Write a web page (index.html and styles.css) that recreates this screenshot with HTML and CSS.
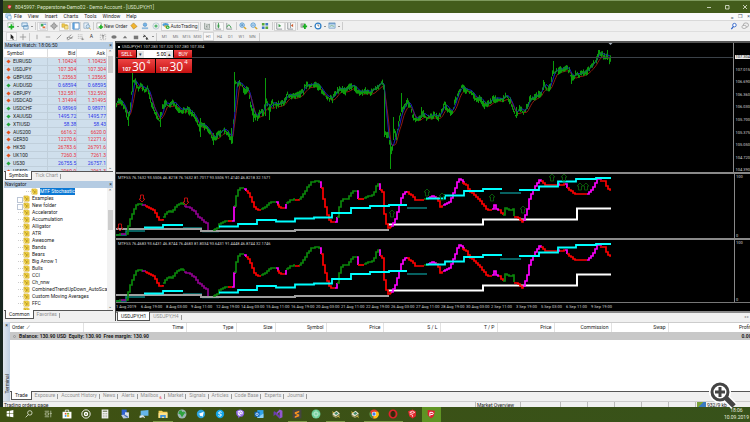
FILE: index.html
```html
<!DOCTYPE html>
<html lang="en">
<head>
<meta charset="utf-8">
<title>8045997: Pepperstone-Demo02 - Demo Account</title>
<link rel="stylesheet" href="styles.css">
</head>
<body>
<svg class="defs" aria-hidden="true">
  <symbol id="i-ind" viewBox="0 0 8 8"><path d="M1 1h5l1 1v5H1z" fill="#f3d548" stroke="#c9a21c" stroke-width=".6"/><path d="M2 2.500l2 1.500 1-1M3 6l3-2" stroke="#8a6a10" stroke-width=".7" fill="none"/><path d="M1 5l1 2" stroke="#fff" stroke-width=".7"/></symbol>
  <symbol id="i-bars" viewBox="0 0 9 9"><path d="M2 1v7h6M4.500 2v5M7 2v5M4.500 5h-1M7 3H6" stroke="#7a8a80" fill="none"/></symbol>
  <symbol id="i-candle" viewBox="0 0 9 9"><path d="M2 1v7h6" stroke="#8a8f94" fill="none"/><path d="M5 1v6" stroke="#3a9a4a"/><path d="M4 3h2v3H4z" fill="#3a9a4a"/></symbol>
  <symbol id="i-line" viewBox="0 0 9 9"><path d="M2 1v7h6" stroke="#8a8f94" fill="none"/><path d="M2 6q2.500-6 5 1" stroke="#3a9a4a" fill="none"/></symbol>
  <symbol id="i-shift" viewBox="0 0 9 9"><path d="M2 1v7h6" stroke="#8a8f94" fill="none"/><path d="M4 2l3 2.500L4 6z" fill="#3a9a4a"/></symbol>
  <symbol id="i-shift2" viewBox="0 0 9 9"><path d="M2 1v7h6M5 1v6" stroke="#8a8f94" fill="none"/><path d="M8 2L5.500 4 8 6z" fill="#d06030"/></symbol>
  <symbol id="i-mt" viewBox="0 0 18 18"><path d="M3 2l13 1-2 10-5 4-6-6z" fill="#e02030"/><path d="M7 13V6h4a2 2 0 010 4H8" fill="none" stroke="#fff" stroke-width="1.800"/></symbol>
  <symbol id="i-note" viewBox="0 0 18 18"><path d="M2 9l8-6 6 5-8 6z" fill="#e8e4d0"/><path d="M3 10l6 4 7-5-1 4-6 3-6-3z" fill="#9b9a60"/><path d="M6 8l4-3 3 3-4 3z" fill="#3e8a6a"/><path d="M2 5l4 2M12 13l4 2" stroke="#e8c33a" stroke-width="1.500"/></symbol>
</svg>

<div class="app">
  <header class="titlebar">
    <svg class="logo" viewBox="0 0 18 18"><use href="#i-mt"/></svg>
    <h1>8045997: Pepperstone-Demo02 - Demo Account - [USDJPY,H1]</h1>
    <div class="winbtns">
      <button aria-label="Minimize"><svg viewBox="0 0 6 6"><path d="M1 3.500h4"/></svg></button>
      <button aria-label="Maximize"><svg viewBox="0 0 6 6"><path d="M1.500 1.500h3.500v3.500h-3.500z"/></svg></button>
      <button aria-label="Close"><svg viewBox="0 0 6 6"><path d="M1 1l4 4M5 1L1 5"/></svg></button>
    </div>
  </header>

  <nav class="menubar" aria-label="Menu">
    <svg class="ico" viewBox="0 0 8 8"><path d="M1 1h5v4H1z" fill="#d9ecfb" stroke="#5b9bd0" stroke-width=".7"/><path d="M3 3h4v4H3z" fill="#eef6fd" stroke="#5b9bd0" stroke-width=".7"/></svg>
    <a href="#">File</a><a href="#">View</a><a href="#">Insert</a><a href="#">Charts</a><a href="#">Tools</a><a href="#">Window</a><a href="#">Help</a>
    <span class="docbtns"><button aria-label="Minimize chart">‗</button><button aria-label="Restore chart">❐</button><button aria-label="Close chart">×</button></span>
  </nav>

  <div class="toolbar main-tools">
    <button class="drop" aria-label="New chart"><svg viewBox="0 0 9 9"><path d="M1 1h6v5H1z" fill="#fff" stroke="#8aa58a" stroke-width=".8"/><path d="M5 2.500v6M2 5.500h6" stroke="#1db324" stroke-width="2"/></svg></button>
    <button class="drop" aria-label="Profiles"><svg viewBox="0 0 9 9"><path d="M1 1h6v4H1zM3 4h5v4H3z" fill="#dcecf9" stroke="#5c8fbc" stroke-width=".8"/></svg></button>
    <i class="sep"></i>
    <button class="on" aria-label="Market Watch"><svg viewBox="0 0 9 9"><path d="M1 1h7v7H1z" fill="#fff" stroke="#aab" stroke-width=".6"/><path d="M2 2h3v3H2z" fill="#40a858"/><path d="M4 5h3v2H4z" fill="#e36f3a"/><path d="M5 2h3v1H5z" fill="#458ad0"/></svg></button>
    <button aria-label="Data Window"><svg viewBox="0 0 9 9"><circle cx="4.500" cy="4.500" r="2.500" fill="none" stroke="#777"/><path d="M4.500 0v9M0 4.500h9" stroke="#888" stroke-width=".8"/></svg></button>
    <button class="on" aria-label="Navigator"><svg viewBox="0 0 9 9"><path d="M1 2h3l1 1h2v3H1z" fill="#f2ca4a" stroke="#b9932a" stroke-width=".5"/><path d="M4 4h4v4H4z" fill="#f7e18a" stroke="#b9932a" stroke-width=".5"/></svg></button>
    <button class="on" aria-label="Terminal"><svg viewBox="0 0 9 9"><path d="M1 1h7v7H1z" fill="#fff" stroke="#4a86c0"/><path d="M1 1h2v7H1z" fill="#5ba0dc"/></svg></button>
    <button aria-label="Strategy Tester"><svg viewBox="0 0 9 9"><path d="M1 1h5v6H1z" fill="#e8f1f9" stroke="#7b9ab5" stroke-width=".7"/><circle cx="5.500" cy="5" r="2" fill="#cfe6f7" stroke="#6a8fae" stroke-width=".7"/><path d="M7 6.500l1.500 2" stroke="#d2a530"/></svg></button>
    <i class="sep"></i>
    <button class="wide"><svg viewBox="0 0 9 9"><path d="M1 1h5v6H1z" fill="#fff" stroke="#999" stroke-width=".7"/><path d="M5.500 3v5M3 5.500h5" stroke="#1db324" stroke-width="1.700"/></svg>New Order</button>
    <button aria-label="MetaEditor"><svg viewBox="0 0 9 9"><path d="M1 4l3-3 4 4-4 3z" fill="#f1b52f" stroke="#a8761a" stroke-width=".6"/></svg></button>
    <button aria-label="Options"><svg viewBox="0 0 9 9"><circle cx="4.500" cy="3" r="2" fill="#74b4e8" stroke="#4482b8" stroke-width=".6"/><path d="M1 6h7v2H1z" fill="#8fb9dc"/></svg></button>
    <button aria-label="Signals"><svg viewBox="0 0 9 9"><circle cx="4.500" cy="4.500" r="3.500" fill="none" stroke="#9bbbc8" stroke-width=".7"/><circle cx="4.500" cy="4.500" r="1.800" fill="#55b870"/></svg></button>
    <button class="wide on"><svg viewBox="0 0 9 9"><ellipse cx="4" cy="3" rx="3.500" ry="2" fill="#4c9ed8"/><path d="M2 4h5l-2 4z" fill="#e8b83a"/><circle cx="6.500" cy="6" r="2" fill="#26ad3c"/><path d="M6 5l1.500 1L6 7z" fill="#fff"/></svg>AutoTrading</button>
    <i class="sep"></i>
    <button aria-label="Bar chart"><svg viewBox="0 0 9 9"><use href="#i-bars"/></svg></button>
    <button class="on" aria-label="Candlesticks"><svg viewBox="0 0 9 9"><use href="#i-candle"/></svg></button>
    <button aria-label="Line chart"><svg viewBox="0 0 9 9"><use href="#i-line"/></svg></button>
    <i class="sep"></i>
    <button aria-label="Zoom in"><svg viewBox="0 0 9 9"><path d="M5.500 5.500L8 8" stroke="#d8a72c" stroke-width="1.600"/><circle cx="3.500" cy="3.500" r="2.500" fill="#d6ecfb" stroke="#4a94d0"/><path d="M2 3.500h3M3.500 2v3" stroke="#3377b0" stroke-width=".8"/></svg></button>
    <button aria-label="Zoom out"><svg viewBox="0 0 9 9"><path d="M5.500 5.500L8 8" stroke="#d8a72c" stroke-width="1.600"/><circle cx="3.500" cy="3.500" r="2.500" fill="#d6ecfb" stroke="#4a94d0"/><path d="M2 3.500h3" stroke="#3377b0" stroke-width=".8"/></svg></button>
    <button aria-label="Tile windows"><svg viewBox="0 0 9 9"><path d="M1 1h3v3H1zM5 5h3v3H5z" fill="#56a838"/><path d="M5 1h3v3H5zM1 5h3v3H1z" fill="#3f78c0"/></svg></button>
    <i class="sep"></i>
    <button class="on" aria-label="Auto scroll"><svg viewBox="0 0 9 9"><use href="#i-shift"/></svg></button>
    <button class="on" aria-label="Chart shift"><svg viewBox="0 0 9 9"><use href="#i-shift2"/></svg></button>
    <i class="sep"></i>
    <button class="drop" aria-label="Indicators"><svg viewBox="0 0 9 9"><path d="M1 2h4v4H1z" fill="#bbb" stroke="#888" stroke-width=".6"/><path d="M5.500 2v6M3 5h5" stroke="#18b020" stroke-width="2"/></svg></button>
    <button class="drop" aria-label="Periods"><svg viewBox="0 0 9 9"><circle cx="4.500" cy="4.500" r="3.300" fill="#fff" stroke="#2d7cc4" stroke-width="1.400"/><path d="M4.500 2.500v2h1.500" stroke="#444" stroke-width=".7" fill="none"/></svg></button>
    <button class="drop" aria-label="Templates"><svg viewBox="0 0 9 9"><path d="M1 1h7v6H1z" fill="#cfe2f3" stroke="#6f9cc4" stroke-width=".8"/><path d="M1 2h7" stroke="#4c86bd"/><path d="M2 5l2-1 3 1" stroke="#58a058" stroke-width=".7" fill="none"/></svg></button>
    <i class="sep"></i>
    <span class="tail">
      <button aria-label="Search"><svg viewBox="0 0 9 9"><path d="M4 5L1.500 8" stroke="#2d62c8" stroke-width="1.400"/><circle cx="5" cy="3.500" r="2" fill="#fff" stroke="#2d62c8"/></svg></button>
      <button aria-label="Chat"><svg viewBox="0 0 9 9"><ellipse cx="5.500" cy="3.500" rx="3" ry="2.500" fill="#eee" stroke="#999" stroke-width=".8"/><ellipse cx="3.500" cy="5.500" rx="2.500" ry="1.800" fill="#f4f4f4" stroke="#999" stroke-width=".8"/></svg></button>
    </span>
  </div>

  <div class="toolbar draw-tools">
    <button class="on" aria-label="Cursor"><svg viewBox="0 0 9 9"><path d="M3 1v6l1.500-1.500 1 2.500 1-.5-1-2.500H7z" fill="#222"/></svg></button>
    <button aria-label="Crosshair"><svg viewBox="0 0 9 9"><path d="M4.500 1v7M1 4.500h7" stroke="#888" stroke-width=".8"/></svg></button>
    <i class="sep"></i>
    <button aria-label="Vertical line"><svg viewBox="0 0 9 9"><path d="M4.500 2v5" stroke="#888" stroke-width=".8"/></svg></button>
    <button aria-label="Horizontal line"><svg viewBox="0 0 9 9"><path d="M2 4.500h5" stroke="#888" stroke-width=".8"/></svg></button>
    <button aria-label="Trend line"><svg viewBox="0 0 9 9"><path d="M2 7l5-5" stroke="#777" stroke-width=".8"/></svg></button>
    <button aria-label="Channel"><svg viewBox="0 0 9 9"><path d="M1 6l5-4M2 8l6-4M3 5l4 1M1.500 4.500v3" stroke="#777" stroke-width=".8"/></svg></button>
    <button aria-label="Fibonacci"><svg viewBox="0 0 9 9"><path d="M1 2h6M1 4h6M1 6h6" stroke="#999" stroke-width=".8" stroke-dasharray="1 1"/><path d="M6 5v3M5 7h3" stroke="#777" stroke-width=".7"/></svg></button>
    <button aria-label="Text">A</button>
    <button aria-label="Text label"><svg viewBox="0 0 9 9"><path d="M1.500 1.500h6v6h-6z" stroke="#999" stroke-width=".7" stroke-dasharray="1 1" fill="none"/><path d="M3 3h3M4.500 3v3.500" stroke="#666" stroke-width=".8"/></svg></button>
    <button aria-label="Ellipse"><svg viewBox="0 0 9 9"><ellipse cx="4.500" cy="4.500" rx="3" ry="2" fill="#777"/></svg></button>
    <button aria-label="Triangle"><svg viewBox="0 0 9 9"><path d="M4.500 3L7 6H2z" fill="#777"/></svg></button>
    <button aria-label="Rectangle"><svg viewBox="0 0 9 9"><path d="M2 3h5v4H2z" fill="#777"/></svg></button>
    <button class="drop" aria-label="Arrows"><svg viewBox="0 0 9 9"><path d="M1 4l2-2 1 1-2 2zM4 6l2-1 1 2-2 1z" fill="#444"/><path d="M2 2l5 5" stroke="#555"/></svg></button>
    <i class="sep"></i>
    <span class="periods"><button>M1</button><button>M5</button><button>M15</button><button>M30</button><button class="on">H1</button><button>H4</button><button>D1</button><button>W1</button><button>MN</button></span>
    <i class="sep"></i>
  </div>

  <div class="workspace">
    <aside class="sidebar">
      <h2 class="panel-title">Market Watch: 18:06:50<button aria-label="Close Market Watch">×</button></h2>
      <div class="quotes">
        <table class="quotes-head"><thead><tr><th>Symbol</th><th>Bid</th><th>Ask</th></tr></thead></table>
        <div class="quotes-body">
          <table><tbody>
            <tr class="dn"><td>EURUSD</td><td>1.10424</td><td>1.10425</td></tr>
            <tr class="dn"><td>USDJPY</td><td>107.304</td><td>107.304</td></tr>
            <tr class="dn"><td>GBPUSD</td><td>1.23563</td><td>1.23565</td></tr>
            <tr class="up"><td>AUDUSD</td><td>0.68594</td><td>0.68595</td></tr>
            <tr class="dn"><td>GBPJPY</td><td>132.581</td><td>132.593</td></tr>
            <tr class="dn"><td>USDCAD</td><td>1.31494</td><td>1.31495</td></tr>
            <tr class="up"><td>USDCHF</td><td>0.98969</td><td>0.98971</td></tr>
            <tr class="up"><td>XAUUSD</td><td>1495.72</td><td>1495.77</td></tr>
            <tr class="up"><td>XTIUSD</td><td>58.38</td><td>58.43</td></tr>
            <tr class="dn"><td>AUS200</td><td>6616.2</td><td>6620.0</td></tr>
            <tr class="dn"><td>GER30</td><td>12270.6</td><td>12271.6</td></tr>
            <tr class="dn"><td>HK50</td><td>26783.6</td><td>26791.6</td></tr>
            <tr class="dn"><td>UK100</td><td>7260.3</td><td>7261.3</td></tr>
            <tr class="up"><td>US30</td><td>26755.5</td><td>26757.1</td></tr>
            <tr class="dn"><td>US500</td><td>2960.9</td><td>2961.3</td></tr>
          </tbody></table>
        </div>
        <div class="scroll high"><span>⌃</span><i></i><span>⌄</span></div>
      </div>
      <div class="tabs"><button class="active">Symbols</button><button>Tick Chart</button></div>
      <h2 class="panel-title nav-title">Navigator<button aria-label="Close Navigator">×</button></h2>
      <div class="tree">
        <ul>
          <li class="sub"><svg viewBox="0 0 8 8"><use href="#i-ind"/></svg><b>MTF Stochastic</b></li>
          <li class="fold"><svg viewBox="0 0 8 8"><use href="#i-ind"/></svg>Examples</li>
          <li class="fold"><svg viewBox="0 0 8 8"><use href="#i-ind"/></svg>New folder</li>
          <li><svg viewBox="0 0 8 8"><use href="#i-ind"/></svg>Accelerator</li>
          <li><svg viewBox="0 0 8 8"><use href="#i-ind"/></svg>Accumulation</li>
          <li><svg viewBox="0 0 8 8"><use href="#i-ind"/></svg>Alligator</li>
          <li><svg viewBox="0 0 8 8"><use href="#i-ind"/></svg>ATR</li>
          <li><svg viewBox="0 0 8 8"><use href="#i-ind"/></svg>Awesome</li>
          <li><svg viewBox="0 0 8 8"><use href="#i-ind"/></svg>Bands</li>
          <li><svg viewBox="0 0 8 8"><use href="#i-ind"/></svg>Bears</li>
          <li><svg viewBox="0 0 8 8"><use href="#i-ind"/></svg>Big Arrow 1</li>
          <li><svg viewBox="0 0 8 8"><use href="#i-ind"/></svg>Bulls</li>
          <li><svg viewBox="0 0 8 8"><use href="#i-ind"/></svg>CCI</li>
          <li><svg viewBox="0 0 8 8"><use href="#i-ind"/></svg>Ch_nnw</li>
          <li><svg viewBox="0 0 8 8"><use href="#i-ind"/></svg>CombinedTrendUpDown_AutoScaced</li>
          <li><svg viewBox="0 0 8 8"><use href="#i-ind"/></svg>Custom Moving Averages</li>
          <li><svg viewBox="0 0 8 8"><use href="#i-ind"/></svg>FFC</li>
          <li><svg viewBox="0 0 8 8"><use href="#i-ind"/></svg></li>
        </ul>
        <div class="scroll low"><span>⌃</span><i></i><span>⌄</span></div>
      </div>
      <div class="tabs"><button class="active">Common</button><button>Favorites</button></div>
    </aside>

    <main class="chart">
      <section class="pane price">
        <div class="plot">
          <svg id="price" width="500" height="130" viewBox="116 43 500 130"></svg>
          <div class="level"></div>
          <p class="caption"><span class="mark"></span>USDJPY,H1 107.283 107.320 107.280 107.304</p>
          <form class="oneclick">
            <button type="button" class="side">SELL</button>
            <label class="lot"><span>▾</span><input aria-label="Volume" value="5.00"><span>▴</span></label>
            <button type="button" class="side">BUY</button>
            <button type="button" class="quote"><small>107</small><strong>30</strong><sup>4</sup></button>
            <button type="button" class="quote"><small>107</small><strong>30</strong><sup>4</sup></button>
          </form>
        </div>
        <div class="scale"><b>107.304</b><span>107.015</span><span>106.690</span><span>106.360</span><span>106.030</span><span>105.700</span><span>105.375</span><span>105.050</span><span>104.720</span><span>104.390</span></div>
      </section>
      <section class="pane osc">
        <div class="plot"><svg id="osc1" width="500" height="63" viewBox="116 240 500 63"></svg><p class="caption">MTFSS 76.1632 93.5506 46.8218 76.1632 81.7017 93.5506 91.4140 46.8218 32.1571</p></div>
        <div class="scale ends"><span>100</span><span>0</span></div>
      </section>
      <section class="pane osc">
        <div class="plot"><svg id="osc2" width="500" height="63" viewBox="116 240 500 63"></svg><p class="caption">MTFSS 76.4683 93.6431 46.8744 76.4683 81.8034 93.6431 91.4448 46.8744 32.1746</p></div>
        <div class="scale ends"><span>100</span><span>0</span></div>
      </section>
      <div class="axis"><span>1 Aug 2019</span><span>6 Aug 19:00</span><span>8 Aug 03:00</span><span>9 Aug 11:00</span><span>12 Aug 19:00</span><span>14 Aug 03:00</span><span>15 Aug 11:00</span><span>16 Aug 19:00</span><span>20 Aug 03:00</span><span>21 Aug 11:00</span><span>22 Aug 19:00</span><span>26 Aug 03:00</span><span>27 Aug 11:00</span><span>28 Aug 19:00</span><span>30 Aug 03:00</span><span>2 Sep 11:00</span><span>3 Sep 19:00</span><span>5 Sep 03:00</span><span>6 Sep 11:00</span><span>9 Sep 19:00</span></div>
      <div class="tabs chart-tabs"><button class="active">USDJPY,H1</button><button>USDJPY,H4</button><span class="arrows">◂ ▸</span></div>
    </main>
  </div>

  <section class="terminal">
    <div class="rail"><button aria-label="Close Terminal">×</button><span>Terminal</span></div>
    <div class="term-main">
      <div class="orders">
        <table>
          <colgroup><col class="c-order"><col class="c-time"><col class="c-type"><col class="c-size"><col class="c-sym"><col class="c-num"><col class="c-num"><col class="c-num"><col class="c-num"><col class="c-num"><col class="c-num"><col></colgroup>
          <thead><tr><th>Order &nbsp; <i>∕</i></th><th>Time</th><th>Type</th><th>Size</th><th>Symbol</th><th>Price</th><th>S / L</th><th>T / P</th><th>Price</th><th>Commission</th><th>Swap</th><th>Profit</th></tr></thead>
          <tbody><tr><td colspan="11"><span class="dot"></span>Balance: 130.90 USD &nbsp;Equity: 130.90 &nbsp;Free margin: 130.90</td><td>0.00</td></tr></tbody>
        </table>
      </div>
      <div class="tabs term-tabs"><button class="active">Trade</button><button>Exposure</button><button>Account History</button><button>News</button><button>Alerts</button><button>Mailbox <sub>6</sub></button><button>Market</button><button>Signals</button><button>Articles</button><button>Code Base</button><button>Experts</button><button>Journal</button></div>
    </div>
  </section>

  <footer class="status"><span class="hint">Trading orders page</span><span class="st-wide">Market Overview</span><span class="st-mid"></span><span></span><span></span><span></span><span></span><span></span><span class="st-net"><i></i>932/9 kb</span></footer>
</div>

<nav class="taskbar" aria-label="Taskbar">
  <div class="apps">
    <button aria-label="Start"><svg viewBox="0 0 18 18"><path d="M3 4l5-1v5H3zM9 3l6-1v6H9zM3 9h5v5l-5-1zM9 9h6v6l-6-1z" fill="#fff"/></svg></button>
    <button aria-label="Search"><svg viewBox="0 0 18 18"><circle cx="10.500" cy="7" r="4" fill="none" stroke="#dfe4d2" stroke-width="1.500"/><path d="M8 10l-5 5" stroke="#dfe4d2" stroke-width="1.500"/></svg></button>
    <button aria-label="Task View"><svg viewBox="0 0 18 18"><path d="M3 4h8M3 14h8M4 7h6v4H4zM14 3v12M12 8h4" fill="none" stroke="#b9c4a4" stroke-width="1.400"/></svg></button>
    <button aria-label="Store"><svg viewBox="0 0 18 18"><path d="M1 5h16v12H1z" fill="#fff"/><path d="M6 5V2h6v3" fill="none" stroke="#fff" stroke-width="1.500"/><path d="M5 7h3v3H5z" fill="#e5522d"/><path d="M9 7h4v3H9z" fill="#7ab530"/><path d="M5 11h3v3H5z" fill="#2b9ae0"/><path d="M9 11h4v3H9z" fill="#f3b51c"/></svg></button>
    <button aria-label="Groove"><svg viewBox="0 0 18 18"><circle cx="9" cy="9" r="7.500" fill="none" stroke="#fff" stroke-width="1.600"/><circle cx="9" cy="9" r="2.800" fill="none" stroke="#fff" stroke-width="2.500"/></svg></button>
    <button aria-label="Calculator"><svg viewBox="0 0 18 18"><path d="M3 1h12v16H3z" fill="#f4f4f4"/><path d="M5 3h8v2H5z" fill="#6a7650"/><path d="M5 8h8M5 11h8M5 14h8" stroke="#6a7650" stroke-dasharray="2 1"/></svg></button>
    <button aria-label="Network"><svg viewBox="0 0 18 18"><path d="M3 1h9v10H3z" fill="#2f63d0"/><path d="M9 6h7v10H9z" fill="#dce3ea"/><path d="M2 11l10-1 4 6-10 1z" fill="#b8c7de"/><path d="M8 11l6 4" stroke="#3a68b0" stroke-width="2"/></svg></button>
    <button aria-label="Remote Desktop"><svg viewBox="0 0 18 18"><path d="M3 3l14-1v10L3 12z" fill="#65b5ea"/><path d="M1 12l6-1v4l-6 1z" fill="#d9e7f2"/><path d="M7 12l3 4" stroke="#ddd" stroke-width="2"/></svg></button>
    <button class="run" aria-label="Explorer"><svg viewBox="0 0 18 18"><path d="M1 3h6l2 2h8v11H1z" fill="#f7cf55"/><path d="M1 7h16v9H1z" fill="#fbe08a"/><path d="M4 11h10v5h-3v-2H7v2H4z" fill="#3d91da"/></svg></button>
    <button aria-label="Globe"><svg viewBox="0 0 18 18"><circle cx="9" cy="9" r="8" fill="#9eb6b4"/><path d="M4 4q5-4 5 1 5 0 4 4l-4 6-3-5-4-2z" fill="#2da23c"/><path d="M11 3l5 4-2 2z" fill="#2da23c"/></svg></button>
    <button aria-label="Telegram"><svg viewBox="0 0 18 18"><circle cx="9" cy="9" r="7.500" fill="#2ca4df"/><path d="M4 9l10-4-2 9-3-2-2 1v-3z" fill="#fff"/></svg></button>
    <button aria-label="Skype"><svg viewBox="0 0 18 18"><circle cx="9" cy="9" r="7.500" fill="#12a5e8"/><path d="M12 6q-3-2-5 0t2 3 2 3-5 0" fill="none" stroke="#fff" stroke-width="1.800"/></svg></button>
    <button aria-label="Viber"><svg viewBox="0 0 18 18"><path d="M2 4q7-6 14 0 2 7-3 10H9l-3 3v-3Q1 12 2 4z" fill="#8a63e0"/><path d="M5 4q8-3 9 2 0 6-5 6-5 0-4-8z" fill="#fff"/><path d="M7 5q-1 3 4 6l1-2M9 5q3 0 3 3" stroke="#8a63e0" stroke-width="1.400" fill="none"/></svg></button>
    <button aria-label="Outlook"><svg viewBox="0 0 18 18"><path d="M6 2h11v13H6z" fill="#31a4ea"/><path d="M6 9l5 3 6-4v8H6z" fill="#8bd0f7"/><path d="M1 5h9v9H1z" fill="#0c64b8"/><circle cx="5.500" cy="9.500" r="2.200" fill="none" stroke="#fff" stroke-width="1.400"/></svg></button>
    <button aria-label="Visual Studio"><svg viewBox="0 0 18 18"><path d="M12 1l5 2v12l-5 2-8-8 8-8v4L8 9l4 4z" fill="#9157d0"/><path d="M1 5l2-1 10 9-1 4zM1 13V5l4 4z" fill="#6c3db2"/></svg></button>
    <button class="run" aria-label="Sublime Text"><svg viewBox="0 0 18 18"><path d="M1 1h16v16H1z" fill="#454541"/><path d="M5 6l8-3v3L8 8l5 2v3l-8 3v-3l5-2-5-2z" fill="#f7931e"/></svg></button>
    <button aria-label="Atom"><svg viewBox="0 0 18 18"><circle cx="9" cy="9" r="8" fill="#67cc94"/><g fill="none" stroke="#d8f5e4"><ellipse cx="9" cy="9" rx="6" ry="2.500"/><ellipse cx="9" cy="9" rx="2.500" ry="6"/></g></svg></button>
    <button class="run" aria-label="MetaEditor"><svg viewBox="0 0 18 18"><use href="#i-note"/></svg></button>
    <button aria-label="MetaEditor 2"><svg viewBox="0 0 18 18"><use href="#i-note"/></svg></button>
    <button class="run" aria-label="Chrome"><svg viewBox="0 0 18 18"><circle cx="9" cy="9" r="8" fill="#e33b2e"/><path d="M2 5l6 12A8 8 0 012 5z" fill="#2aa34a"/><path d="M9 5h7.500A8 8 0 018 17z" fill="#fbc116"/><circle cx="9" cy="9" r="4" fill="#fff"/><circle cx="9" cy="9" r="3" fill="#3f80ee"/></svg></button>
    <button class="run" aria-label="Opera"><svg viewBox="0 0 18 18"><ellipse cx="9" cy="9" rx="6.500" ry="6.500" fill="none" stroke="#e3202c" stroke-width="3"/><ellipse cx="9" cy="9" rx="3.500" ry="6" fill="#36260c"/></svg></button>
    <button aria-label="SketchUp"><svg viewBox="0 0 18 18"><path d="M2 4l8-3 6 3v9l-6 4-6-4z" fill="#e6282e"/><path d="M5 6l5-2 4 2-4 2zM5 9l5 2v3" stroke="#fff" stroke-width="1.300" fill="none"/></svg></button>
    <button class="cur" aria-label="MetaTrader"><svg viewBox="0 0 18 18"><use href="#i-mt"/></svg></button>
  </div>
  <time class="clock"><span>18:06</span><span>10.09.2019</span></time>
</nav>

<button class="zoom" aria-label="Enlarge">
  <svg viewBox="0 0 30 30"><g fill="none" stroke="#fff"><circle cx="12" cy="12" r="8" stroke-width="6"/><path d="M18 18l8 8" stroke-width="8"/></g><circle cx="12" cy="12" r="8" fill="#fff" stroke="#444" stroke-width="3"/><path d="M18 18l8 8" stroke="#444" stroke-width="5"/><path d="M12 7v10M7 12h10" stroke="#444" stroke-width="3"/></svg>
</button>
<script src="chart.js"></script>
</body>
</html>
```
FILE: styles.css
```css
* { box-sizing: border-box; }

html, body { height: 100%; }

body {
  margin: 0;
  display: flex;
  flex-direction: column;
  overflow: hidden;
  background: #17261f;
  color: #222;
  font: 5px/7px Roboto, "Liberation Sans", sans-serif;
}

button {
  padding: 0;
  border: 0;
  background: none;
  color: inherit;
  font: inherit;
  white-space: nowrap;
}

h1, h2, p, ul { margin: 0; padding: 0; font: inherit; list-style: none; }
a { color: inherit; text-decoration: none; }
svg { display: block; flex: none; }
table { border-collapse: collapse; table-layout: fixed; width: 100%; }
th { font-weight: 400; }
th, td { padding: 0; }
.defs { position: absolute; width: 0; height: 0; }

.app {
  flex: 1;
  min-height: 0;
  margin-left: 3px;
  display: flex;
  flex-direction: column;
  background: #f0f0f0;
}

/* title and menu */
.titlebar {
  flex: 0 0 13px;
  display: flex;
  align-items: center;
  gap: 3px;
  padding-left: 4px;
  border-top: 1px solid #7f9a5e;
  background: #435c1b;
  color: #dfe6d0;
}
.logo { width: 5px; height: 6px; }
.titlebar h1 { flex: 1; }
.winbtns { display: flex; gap: 12px; padding-right: 2px; }
.winbtns svg { width: 6px; height: 6px; fill: none; stroke: #e6ebdc; stroke-width: .8; }

.menubar {
  flex: 0 0 8px;
  display: flex;
  align-items: center;
  padding-left: 2px;
  border-bottom: 1px solid #d9d9d9;
  background: #fbfbfb;
}
.menubar .ico { width: 7px; height: 7px; margin-right: 2px; }
.menubar a { margin-right: 6px; }
.docbtns { margin-left: auto; display: flex; gap: 5px; color: #456; }

/* toolbars */
.toolbar { display: flex; align-items: center; padding-left: 3px; color: #333; }
.main-tools { flex: 0 0 11px; border-bottom: 1px solid #dedede; }
.draw-tools { flex: 0 0 9px; }
.toolbar button {
  flex: none;
  display: flex;
  align-items: center;
  justify-content: center;
  width: 11px;
  height: 9px;
}
.toolbar svg { width: 8px; height: 8px; }
.toolbar .on { background: #f8f8f8; box-shadow: inset 0 0 0 1px #d6d6d6; }
.toolbar .drop { width: 14px; }
.toolbar .drop::after {
  content: "";
  border: 1px solid transparent;
  border-top-color: #333;
  border-bottom: 0;
  margin-left: 2px;
}
.toolbar .wide { width: auto; padding: 0 1px; }
.sep { flex: none; width: 1px; height: 8px; margin: 0 1px; background: #ccc; }
.tail { margin-left: auto; display: flex; }
.periods { display: flex; padding-left: 1px; font-size: 4px; color: #777; }

/* panels on the left */
.workspace { flex: 1; min-height: 0; display: flex; }
.sidebar {
  flex: 0 0 112px;
  min-width: 0;
  display: flex;
  flex-direction: column;
  padding: 1px 2px 1px 1px;
}
.panel-title {
  flex: 0 0 7px;
  display: flex;
  justify-content: space-between;
  padding: 0 1px;
  background: #b4cbe2;
}
.quotes {
  flex: 0 0 122px;
  display: grid;
  grid-template: 9px 1fr / 1fr 6px;
  background: #fff;
  overflow: hidden;
}
.quotes-head { height: 9px; }
.quotes-head th { border-right: 1px solid #ddd; border-bottom: 1px solid #ddd; text-align: right; padding-right: 1px; }
.quotes-head th:first-child { text-align: left; padding-left: 3px; }
.quotes th:first-child, .quotes td:first-child { width: 43px; }
.quotes-body { grid-row: 2; min-height: 0; overflow: hidden; background: #cfdfec; }
.quotes-body table { height: 117px; }
.quotes-body td { border: 1px solid #c0cfdb; border-left: 0; border-top: 0; text-align: right; line-height: 6px; }
.quotes-body td:first-child { text-align: left; }
.quotes-body td:first-child::before {
  content: "";
  display: inline-block;
  width: 3px;
  height: 3px;
  margin: 0 3px 0 3px;
  transform: rotate(45deg);
  background: #e4521e;
}
.quotes-body .up td:first-child::before { background: #23a83a; }
.dn td + td { color: #e8303a; }
.up td + td { color: #2a35e8; }
.scroll {
  grid-column: 2;
  grid-row: 1 / 3;
  display: flex;
  flex-direction: column;
  align-items: center;
  background: #f2f2f2;
  color: #444;
}
.scroll span { line-height: 7px; }
.scroll i { width: 5px; background: #cdcdcd; }
.scroll span:last-child { margin-top: auto; }
.high i { height: 17px; }
.low i { height: 20px; margin-top: 15px; }

.tabs {
  flex: 0 0 10px;
  display: flex;
  align-items: flex-start;
  border-top: 1px solid #555;
  color: #909090;
}
.tabs button { padding: 0 3px; line-height: 7px; position: relative; }
.tabs button::after {
  content: "";
  position: absolute;
  right: 0;
  top: 2px;
  height: 5px;
  border-right: 1px solid #999;
}
.tabs .active {
  margin: -1px 0 0 1px;
  padding: 1px 3px 0;
  border: 1px solid #555;
  border-top: 0;
  background: #fff;
  color: #222;
}
.tabs .active::after { display: none; }

.tree { flex: 1; min-height: 0; display: flex; background: #fff; overflow: hidden; }
.tree ul { flex: 1; min-width: 0; overflow: hidden; }
.tree li { display: flex; align-items: center; height: 7px; padding-left: 19px; gap: 2px; white-space: nowrap; position: relative; }
.tree li::before { content: ""; position: absolute; left: 14px; width: 5px; top: 3px; border-top: 1px dotted #ccc; }
.tree li.sub { padding-left: 27px; }
.tree li.sub::before { left: 22px; }
.tree .fold::before { left: 13px; top: 2px; width: 4px; height: 4px; border: 1px solid #bcc6d6; }
.tree svg { width: 7px; height: 7px; }
.tree b { font-weight: 400; background: #0b78d4; color: #fff; }
.tree .scroll { flex: 0 0 6px; }

/* chart window */
.chart {
  flex: 1;
  min-width: 0;
  display: flex;
  flex-direction: column;
  border-left: 1px solid #444;
  border-top: 2px solid #555;
}
.pane { display: flex; background: #000; border-bottom: 2px solid #8a8a8a; overflow: hidden; color: #d4d4d4; font-size: 4px; }
.price { flex: 132 1 0; }
.osc { flex: 65 1 0; }
.osc + .osc { flex-grow: 63; border-bottom: 0; }
.plot { flex: 1; min-width: 0; position: relative; overflow: hidden; border-right: 1px solid #888; }
.scale { flex: 0 0 15px; display: flex; flex-direction: column; justify-content: space-between; padding: 12px 0 0 1px; line-height: 4px; }
.scale b { font-weight: 400; background: #e8e8e8; color: #111; }
.scale.ends { padding-top: 1px; }
.caption { position: absolute; left: 2px; top: 0; white-space: nowrap; }
.mark { display: inline-block; width: 2px; height: 2px; margin-right: 2px; background: #ddd; }
.level { position: absolute; left: 0; right: 0; top: 14px; border-top: 1px solid #3a4148; }
.axis {
  flex: 0 0 9px;
  display: flex;
  background: #000;
  border-top: 1px solid #777;
  color: #d4d4d4;
  font-size: 4px;
  white-space: nowrap;
  overflow: hidden;
}
.axis span { flex: 0 0 25px; }
.chart-tabs { flex-basis: 9px; border-top: 2px solid #888; }
.arrows { margin-left: auto; padding-right: 1px; font-size: 4px; }

.oneclick {
  position: absolute;
  left: 2px;
  top: 7px;
  width: 74px;
  display: grid;
  grid-template: 8px 14px / repeat(4, 1fr);
  gap: 1px;
  color: #fff;
  font-size: 5px;
}
.oneclick button { background: linear-gradient(#ee4444, #c41111); }
.lot { grid-column: span 2; display: flex; align-items: center; background: #fff; color: #333; }
.lot span { flex: 0 0 7px; text-align: center; background: #e4e4e4; }
.lot input { flex: 1; min-width: 0; width: 0; padding: 0; border: 0; font: inherit; text-align: right; background: none; }
.oneclick .quote { grid-column: span 2; display: flex; justify-content: center; gap: 1px; align-items: flex-end; }
.quote small { font-size: 5px; font-weight: 700; line-height: 8px; }
.quote strong { font: 12px/13px "Open Sans", sans-serif; }
.quote sup { font: 6px/7px "Open Sans", sans-serif; align-self: flex-start; }

/* terminal */
.terminal { flex: 0 0 80px; display: flex; padding-top: 1px; }
.rail {
  flex: 0 0 7px;
  display: flex;
  flex-direction: column;
  align-items: center;
  justify-content: space-between;
  padding-bottom: 8px;
  background: linear-gradient(90deg, #dfe6ee, #bfd0e2);
}
.rail span { writing-mode: vertical-rl; transform: rotate(180deg); line-height: 6px; }
.term-main { flex: 1; min-width: 0; display: flex; flex-direction: column; }
.orders { flex: 1; background: #fff; overflow: hidden; border-top: 1px solid #ccc; }
.orders table { width: calc(100% + 4px); }
.c-order { width: 73px; }
.c-time { width: 103px; }
.c-type { width: 50px; }
.c-size { width: 39px; }
.c-sym { width: 51px; }
.c-num { width: 57px; }
.orders th { height: 9px; text-align: right; padding-right: 2px; border-right: 1px solid #e2e2e2; }
.orders th:first-child { text-align: left; padding-left: 2px; }
.orders td { height: 8px; background: #c8c8c8; font-weight: 700; }
.orders td:last-child { text-align: right; padding-right: 2px; }
.dot { display: inline-block; width: 3px; height: 3px; margin: 0 3px 0 3px; border: 1px solid #999; border-radius: 50%; }
.term-tabs sub { color: #e02020; font-size: 4px; line-height: 4px; }

.status {
  flex: 0 0 6px;
  display: flex;
  overflow: hidden;
  border-top: 1px solid #ccc;
  line-height: 6px;
  padding-left: 1px;
}
.status span { flex: 0 0 27px; border-left: 1px solid #bbb; padding-left: 1px; white-space: nowrap; }
.status .hint { flex: 1; border: 0; padding: 0; }
.status .st-wide { flex-basis: 45px; }
.status .st-mid { flex-basis: 40px; }
.status .st-net { flex-basis: 55px; display: flex; gap: 1px; }
.st-net i { width: 9px; background: linear-gradient(135deg, #7ba33a 50%, #3a7ac0 50%); }

/* taskbar */
.taskbar {
  flex: 0 0 15px;
  display: flex;
  justify-content: space-between;
  background: linear-gradient(90deg, #3f5112, #37521a);
  color: #e8ecdf;
}
.apps { flex: 0 0 441px; display: grid; grid-template-columns: repeat(23, 1fr); }
.apps button { display: flex; align-items: center; justify-content: center; border-bottom: 1px solid transparent; }
.apps svg { width: 10px; height: 10px; }
.apps .run { border-bottom-color: #7f9a4a; }
.apps .cur { background: #5f9424; }
.clock { display: flex; flex-direction: column; align-items: center; padding-right: 1px; }

.zoom { position: absolute; right: 12px; bottom: 12px; }
.zoom svg { width: 30px; height: 30px; }
```
FILE: chart.js
```js
const NS = "http://www.w3.org/2000/svg";

function add(svg, tag, attrs) {
  const el = document.createElementNS(NS, tag);
  for (const key in attrs) el.setAttribute(key, attrs[key]);
  svg.appendChild(el);
}

const parse = text => text.trim().split(/\s+/).map(p => p.split(",").map(Number));

function valueAt(points, x) {
  if (x <= points[0][0]) return points[0][1];
  for (let i = 1; i < points.length; i++) {
    const [x0, y0] = points[i - 1], [x1, y1] = points[i];
    if (x <= x1) return x1 === x0 ? y1 : y0 + (y1 - y0) * (x - x0) / (x1 - x0);
  }
  return points[points.length - 1][1];
}

/* Price pane: hourly bars with a fast and a slow average */
const price = parse(`116,103 119,100 122,104 125,110 128,121 130,106 132,80 135,82 138,89 141,85 144,91 147,88
  149,96 151,104 154,112 157,116 160,123 162,106 165,103 169,106 173,102 176,106 180,111 186,109 190,112 194,116
  197,123 199,127 203,125 207,129 210,134 213,139 216,136 220,133 223,129 227,133 230,138 232,139 233,120 234,80
  237,84 241,84 244,91 248,89 250,104 253,115 257,117 260,112 263,113 265,100 267,104 269,114 271,102 275,105
  280,104 284,102 287,94 292,97 298,95 303,91 305,85 309,86 314,84 319,87 322,92 326,97 332,99 337,90 341,89
  345,91 349,87 353,86 357,91 360,93 365,91 370,93 375,88 379,85 382,82 384,90 385,134 388,136 390,152 392,148
  394,132 396,136 399,118 403,108 407,102 410,106 412,115 415,120 420,117 422,113 427,118 433,115 438,118 441,112
  444,104 448,110 452,113 454,103 458,93 461,87 465,90 471,92 476,100 480,98 484,106 488,103 493,99 498,99 502,100
  505,95 510,101 512,108 515,115 519,108 523,113 527,106 529,99 533,98 537,95 541,93 543,82 547,90 550,86 552,74
  555,71 560,70 566,68 569,71 571,79 575,74 579,75 583,73 588,70 591,66 596,60 598,53 602,55 605,57 607,54 609,60 610,58`);
const spikes = { 132: [72, 92], 128: [112, 126], 160: [112, 127], 200: [118, 137], 213: [133, 145], 231: [128, 144],
  234: [72, 112], 253: [108, 122], 265: [78, 116], 269: [104, 120], 384: [85, 137], 390: [140, 169], 393: [117, 140],
  401: [93, 112], 421: [107, 118], 553: [61, 74], 571: [73, 84], 516: [107, 118], 543: [80, 90], 598: [50, 58], 607: [50, 60] };

let seed = 7;
const rand = () => (seed = (seed * 16807) % 2147483647) / 2147483647;

function average(lag, shift) {
  let d = "";
  for (let x = 117; x <= 610; x++) {
    let sum = 0;
    for (let k = 0; k <= lag; k++) sum += valueAt(price, x - k);
    d += (d ? "L" : "M") + x + " " + (sum / (lag + 1) + shift).toFixed(1);
  }
  return d;
}

const priceSvg = document.getElementById("price");
let bars = "";
for (let x = 116; x <= 610; x++) {
  const y = valueAt(price, x);
  let top = y - rand() * 4, bottom = y + rand() * 4 + .5;
  if (spikes[x]) [top, bottom] = spikes[x];
  bars += `M${x + .5} ${top.toFixed(1)}V${bottom.toFixed(1)}`;
}
add(priceSvg, "path", { d: average(4, -1), stroke: "#1515a8", "stroke-width": "1", fill: "none" });
add(priceSvg, "path", { d: average(6, 2), stroke: "#8c1a10", "stroke-width": "1", fill: "none" });
add(priceSvg, "path", { d: bars, stroke: "#0a9a0a", "stroke-width": "1", fill: "none" });
add(priceSvg, "path", { d: average(4, -1), stroke: "#1a2ab0", "stroke-width": ".5", fill: "none" });
add(priceSvg, "path", { d: "M608.500 43h4l-2 2z", fill: "#aab4c0" });

/* Oscillator panes */
const colors = { g: "#0b860b", r: "#ff0000", m: "#ff00ff", p: "#900090" };
const line = [
  ["g", "116,301 121,300"], ["p", "121,300 126,300"], ["g", "126,300 127,295 129,288 132,280 135,272 138,270 143,271"],
  ["p", "142,271 146,271"], ["r", "145,272 150,274 154,277 156,281 158,285 160,286 163,285"],
  ["g", "163,283 166,279 169,277 172,278 175,273 178,270 181,269 184,271"],
  ["p", "184,272 190,274 194,277 197,282 201,284 203,287 206,289 208,296"],
  ["g", "213,296 217,294 219,290 223,288 226,286 228,287"], ["r", "228,287 232,287"],
  ["m", "232,287 232,276 235,272"], ["g", "234,272 236,262 238,256 240,254 244,254"], ["m", "244,255 246,257"],
  ["r", "246,257 249,260 253,270 255,275 261,276"], ["g", "261,275 266,272 270,268 276,268"], ["m", "276,268 278,271"],
  ["r", "277,271 281,274 285,274"], ["m", "285,274 286,270"], ["g", "286,269 290,266 295,265"], ["r", "295,266 299,265"],
  ["g", "299,265 304,259 307,253 311,248 315,247 320,248"], ["m", "320,248 321,254"],
  ["r", "321,254 323,265 326,277 328,285 331,288 335,288"], ["m", "335,288 337,283"],
  ["g", "337,283 339,273 341,267 343,265 347,265 349,262 352,257 357,257"], ["m", "357,257 358,265"], ["r", "358,265 364,265"],
  ["g", "364,264 369,262 373,261 375,255 377,249 379,250"], ["m", "379,250 380,256"],
  ["r", "380,256 382,258 383,275 386,290 388,294 391,292"],
  ["m", "391,292 395,285 398,274 401,264 404,258 407,257"], ["r", "407,258 412,262 415,266 424,266"], ["g", "424,265 428,264"],
  ["m", "428,264 431,262 436,264"], ["r", "436,264 438,267 440,273 443,272"],
  ["m", "443,271 449,268 452,262 455,254 458,245 461,246 464,249"],
  ["r", "462,249 466,251 469,257 474,261 479,266 483,271 487,276 492,276"], ["m", "492,275 494,271 496,275 499,276"],
  ["r", "499,276 503,281"], ["g", "503,281 504,274 509,276 513,275 514,282"], ["r", "514,283 519,284 521,288 523,287"],
  ["m", "523,286 527,275 529,265 532,258 536,250 539,246 542,247"], ["r", "541,247 545,251 557,251"], ["m", "557,250 560,251"],
  ["r", "560,251 565,250"], ["m", "565,250 567,254"], ["r", "567,254 571,257 575,260 587,260"],
  ["m", "587,260 592,255 595,249 597,245 601,244"], ["r", "600,247 604,247 606,252 609,256 611,256"]
];
const levels = [
  ["#0a8080", 1.5, "M116 301H126V297H145M183 294H202M202 297.500H219M407 274H427M500 259H521"],
  ["#a0a0a0", 2, "M116 295H201V297H295V296H389"],
  ["#ffffff", 2, "M388 290.500H483V285.500H577V274.500H611"]
];
const cyan = "M144 293.500H163V291H183M219 292.500H238V290H257V286H276V287.500H295V284.500H314V283.500H332V279H351V274H370V272H389V271H407" +
  "M426 264.500H445V261.500H464V257H483V255H502M519 256H539V252.500H558V247.500H576V245H596V244H611";

function staircase(text) {
  const points = parse(text);
  const end = points[points.length - 1];
  let d = `M${points[0][0]} ${points[0][1]}`;
  for (let x = points[0][0]; x < end[0]; x += 2) {
    d += `H${x}V${Math.round(valueAt(points, x))}`;
  }
  return d + `H${end[0]}V${end[1]}`;
}

function drawOscillator(svg) {
  for (const [stroke, width, d] of levels) add(svg, "path", { d, stroke, "stroke-width": width, fill: "none" });
  for (const [key, text] of line) {
    add(svg, "path", { d: staircase(text), stroke: colors[key], "stroke-width": 1.7, fill: "none" });
  }
  add(svg, "path", { d: cyan, stroke: "#00ffff", "stroke-width": 1.8, fill: "none" });
}

function drawArrow(svg, x, y, up) {
  const s = up ? 1 : -1;
  const d = `M${x} ${y - 4 * s}l3 ${3 * s}h-1.500v${4 * s}h-3v${-4 * s}h-1.500z`;
  add(svg, "path", { d, stroke: up ? "#0a5c0a" : "#d01010", "stroke-width": ".9", fill: "none" });
}

const first = document.getElementById("osc1");
drawOscillator(first);
drawOscillator(document.getElementById("osc2"));
for (const [x, y] of [[142, 264], [186, 267], [120, 293]]) drawArrow(first, x, y, false);
for (const [x, y] of [[427, 259], [442, 263], [492, 264], [392, 280], [523, 276], [552, 244], [564, 244], [580, 253], [586, 253]]) {
  drawArrow(first, x, y, true);
}
```
